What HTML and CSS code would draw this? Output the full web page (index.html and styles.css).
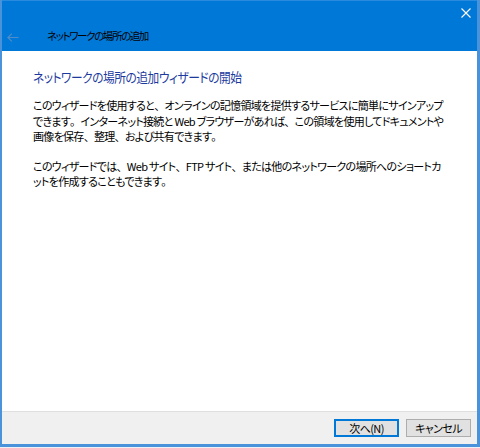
FILE: index.html
```html
<!DOCTYPE html>
<html lang="ja">
<head>
<meta charset="utf-8">
<title>ネットワークの場所の追加</title>
<link rel="stylesheet" href="styles.css">
</head>
<body>
<div class="window">
  <div class="titlebar">
    <div class="titlebar-top">
      <svg class="close" width="10" height="10" viewBox="0 0 10 10"><path d="M0.5 0.5 L9.5 9.5 M9.5 0.5 L0.5 9.5" stroke="#ffffff" stroke-width="1.1" fill="none"/></svg>
    </div>
    <div class="titlebar-row">
      <svg class="back" width="12" height="9" viewBox="0 0 12 9"><path d="M0.8 4.5 H11.5 M4.8 0.6 L0.9 4.5 L4.8 8.4" stroke="#4f8cc9" stroke-width="1.2" fill="none"/></svg>
      <span class="title">ネットワークの場所の追加</span>
    </div>
  </div>
  <div class="content">
    <h1 class="heading"><span class="heading-text">ネットワークの場所の追加ウィザードの開始</span></h1>
    <p class="para">このウィザードを使用すると<span class="pu">、</span>オンラインの記憶領域を提供するサービスに簡単にサインアップ<br>できます<span class="pu">。</span>インターネット接続と Web ブラウザーがあれば<span class="pu">、</span>この領域を使用してドキュメントや<br>画像を保存<span class="pu">、</span>整理<span class="pu">、</span>および共有できます<span class="pu">。</span></p>
    <p class="para">このウィザードでは<span class="pu">、</span>Web サイト<span class="pu">、</span>FTP サイト<span class="pu">、</span>または他のネットワークの場所へのショートカ<br>ットを作成することもできます<span class="pu">。</span></p>
  </div>
  <div class="footer">
    <button class="btn btn-default">次へ(N)</button>
    <button class="btn">キャンセル</button>
  </div>
</div>
</body>
</html>
```
FILE: styles.css
```css
html, body {
  margin: 0;
  padding: 0;
  background: #eef2f7;
}
body {
  width: 480px;
  height: 448px;
  overflow: hidden;
  font-family: "Noto Sans CJK JP", "Noto Sans", sans-serif;
  font-feature-settings: "palt";
}
.window {
  width: 480px;
  height: 447px;
  box-sizing: border-box;
  border-left: 2px solid #4a93da;
  border-right: 3px solid #4a93da;
  border-bottom: 3px solid #4a93da;
  display: flex;
  flex-direction: column;
  background: #ffffff;
}
.titlebar {
  height: 51px;
  background: #0078d7;
  border-top: 1px solid #2a8ade;
  box-sizing: border-box;
  flex: none;
  display: flex;
  flex-direction: column;
}
.titlebar-top {
  height: 26px;
  display: flex;
  justify-content: flex-end;
  align-items: flex-start;
}
.close {
  margin-top: 7px;
  margin-right: 6px;
}
.titlebar-row {
  display: flex;
  align-items: center;
  height: 20px;
}
.back {
  margin-left: 5px;
  margin-right: 28px;
}
.title {
  font-size: 10.5px;
  line-height: 14px;
  margin-top: -2px;
  color: #000000;
  letter-spacing: -1.4px;
  white-space: nowrap;
}
.content {
  flex: 1;
  padding: 17px 0 0 31px;
  background: #ffffff;
}
.heading {
  margin: 0 0 12px 0;
  font-size: 13px;
  font-weight: normal;
  color: #1c3a9e;
  line-height: 18px;
  white-space: nowrap;
}
.heading-text {
  display: inline-block;
  letter-spacing: -0.5px;
  transform: scaleX(0.9);
  transform-origin: left center;
}
.para {
  margin: 0 0 14px 0;
  font-size: 11px;
  line-height: 15.5px;
  color: #000000;
  letter-spacing: -0.7px;
  white-space: nowrap;
}
.pu {
  font-feature-settings: normal;
}
.footer {
  flex: none;
  height: 33px;
  box-sizing: border-box;
  background: #f0f0f0;
  border-top: 1px solid #dfdfdf;
  display: flex;
  justify-content: flex-end;
  align-items: flex-start;
  gap: 7px;
  padding: 7px 6px 0 0;
}
.btn {
  width: 65px;
  height: 18px;
  box-sizing: border-box;
  margin: 0;
  padding: 0;
  background: #e1e1e1;
  border: 1px solid #adadad;
  font-family: "Noto Sans CJK JP", "Noto Sans", sans-serif;
  font-feature-settings: "palt";
  font-size: 11px;
  line-height: 15px;
  color: #000000;
  letter-spacing: -0.6px;
}
.btn-default {
  border: 1px solid #0078d7;
  box-shadow: inset 0 0 0 1px #0078d7;
}
```
